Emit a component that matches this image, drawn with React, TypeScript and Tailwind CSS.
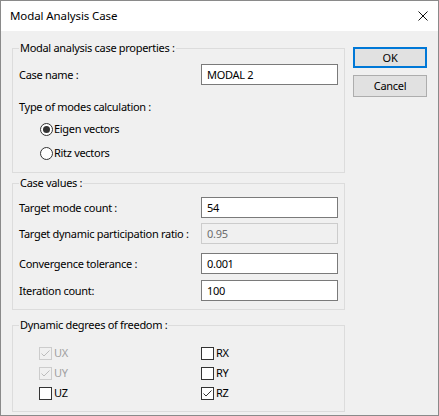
import React from "react";

const font = { fontFamily: '"Noto Sans", "Open Sans", Arial, sans-serif' };

function TextBox({ value, disabled }: { value: string; disabled?: boolean }) {
  return (
    <div
      className={
        "w-[137px] h-[21px] shrink-0 flex items-center pl-[5px] " +
        (disabled
          ? "border border-[#cccccc] bg-[#f0f0f0] text-[#6d6d6d]"
          : "border border-[#7a7a7a] bg-white text-black")
      }
    >
      {value}
    </div>
  );
}

function Radio({ checked, label }: { checked?: boolean; label: string }) {
  return (
    <div className="flex items-center h-[16px]">
      <div className="w-[13px] h-[13px] rounded-full border border-[#333333] bg-white flex items-center justify-center">
        {checked && <div className="w-[7px] h-[7px] rounded-full bg-[#333333]" />}
      </div>
      <span className="ml-[1px] text-black">{label}</span>
    </div>
  );
}

function Check({ checked, disabled, label }: { checked?: boolean; disabled?: boolean; label: string }) {
  const color = disabled ? "#bcbcbc" : "#333333";
  return (
    <div className="flex items-center h-[16px]">
      <div
        className={
          "w-[13px] h-[13px] border flex items-center justify-center " +
          (disabled ? "border-[#cccccc] bg-[#f0f0f0]" : "border-[#333333] bg-white")
        }
      >
        {checked && (
          <svg width="11" height="11" viewBox="0 0 11 11">
            <path d="M1.5 5.5 L4 8 L9.5 2.5" fill="none" stroke={color} strokeWidth="1" />
          </svg>
        )}
      </div>
      <span className={"ml-[2px] " + (disabled ? "text-[#a0a0a0]" : "text-black")}>{label}</span>
    </div>
  );
}

export default function App() {
  return (
    <div
      className="w-[439px] h-[416px] border border-[#8a8a8a] bg-[#f0f0f0] flex flex-col text-[11px] tracking-[-0.3px] leading-[16px] whitespace-nowrap text-black"
      style={font}
    >
      <div className="h-[30px] bg-white flex items-center justify-between pl-[9px] pr-[10px] shrink-0">
        <span className="text-[11.5px] tracking-[-0.1px] text-black">Modal Analysis Case</span>
        <svg width="10" height="10" viewBox="0 0 10 10">
          <path d="M0.5 0.5 L9.5 9.5 M9.5 0.5 L0.5 9.5" stroke="#111" strokeWidth="1" />
        </svg>
      </div>
      <div className="flex flex-1">
        <div className="w-[333px] ml-[11px] flex flex-col">
          <fieldset className="min-w-0 mt-[9px] border border-[#dcdcdc] pl-[6px] pr-[6px] h-[133px]">
            <legend className="px-[1px] text-black">Modal analysis case properties :</legend>
            <div className="flex items-center justify-between mt-[8px]">
              <span>Case name :</span>
              <TextBox value="MODAL 2" />
            </div>
            <div className="mt-[14px]">Type of modes calculation :</div>
            <div className="ml-[21px] mt-[6px] flex flex-col gap-[8px]">
              <Radio checked label="Eigen vectors" />
              <Radio label="Ritz vectors" />
            </div>
          </fieldset>
          <fieldset className="min-w-0 mt-[2px] border border-[#dcdcdc] pl-[6px] pr-[6px] h-[135px]">
            <legend className="px-[1px] text-black">Case values :</legend>
            <div className="flex items-center justify-between mt-[6px]">
              <span>Target mode count :</span>
              <TextBox value="54" />
            </div>
            <div className="flex items-center justify-between mt-[5px]">
              <span>Target dynamic participation ratio :</span>
              <TextBox value="0.95" disabled />
            </div>
            <div className="flex items-center justify-between mt-[9px]">
              <span>Convergence tolerance :</span>
              <TextBox value="0.001" />
            </div>
            <div className="flex items-center justify-between mt-[6px]">
              <span>Iteration count:</span>
              <TextBox value="100" />
            </div>
          </fieldset>
          <fieldset className="min-w-0 mt-[7px] border border-[#dcdcdc] pl-[6px] pr-[6px] h-[95px]">
            <legend className="px-[1px] text-black">Dynamic degrees of freedom :</legend>
            <div className="grid grid-cols-[162px_1fr] gap-y-[4px] mt-[12px] ml-[20px]">
              <Check checked disabled label="UX" />
              <Check label="RX" />
              <Check checked disabled label="UY" />
              <Check label="RY" />
              <Check label="UZ" />
              <Check checked label="RZ" />
            </div>
          </fieldset>
        </div>
        <div className="ml-[8px] mt-[16px] flex flex-col gap-[7px]">
          <button className="w-[74px] h-[21px] border-2 border-[#0078d7] bg-[#e1e1e1] text-black flex items-center justify-center">
            OK
          </button>
          <button className="w-[74px] h-[22px] border border-[#adadad] bg-[#e1e1e1] text-black flex items-center justify-center">
            Cancel
          </button>
        </div>
      </div>
    </div>
  );
}
